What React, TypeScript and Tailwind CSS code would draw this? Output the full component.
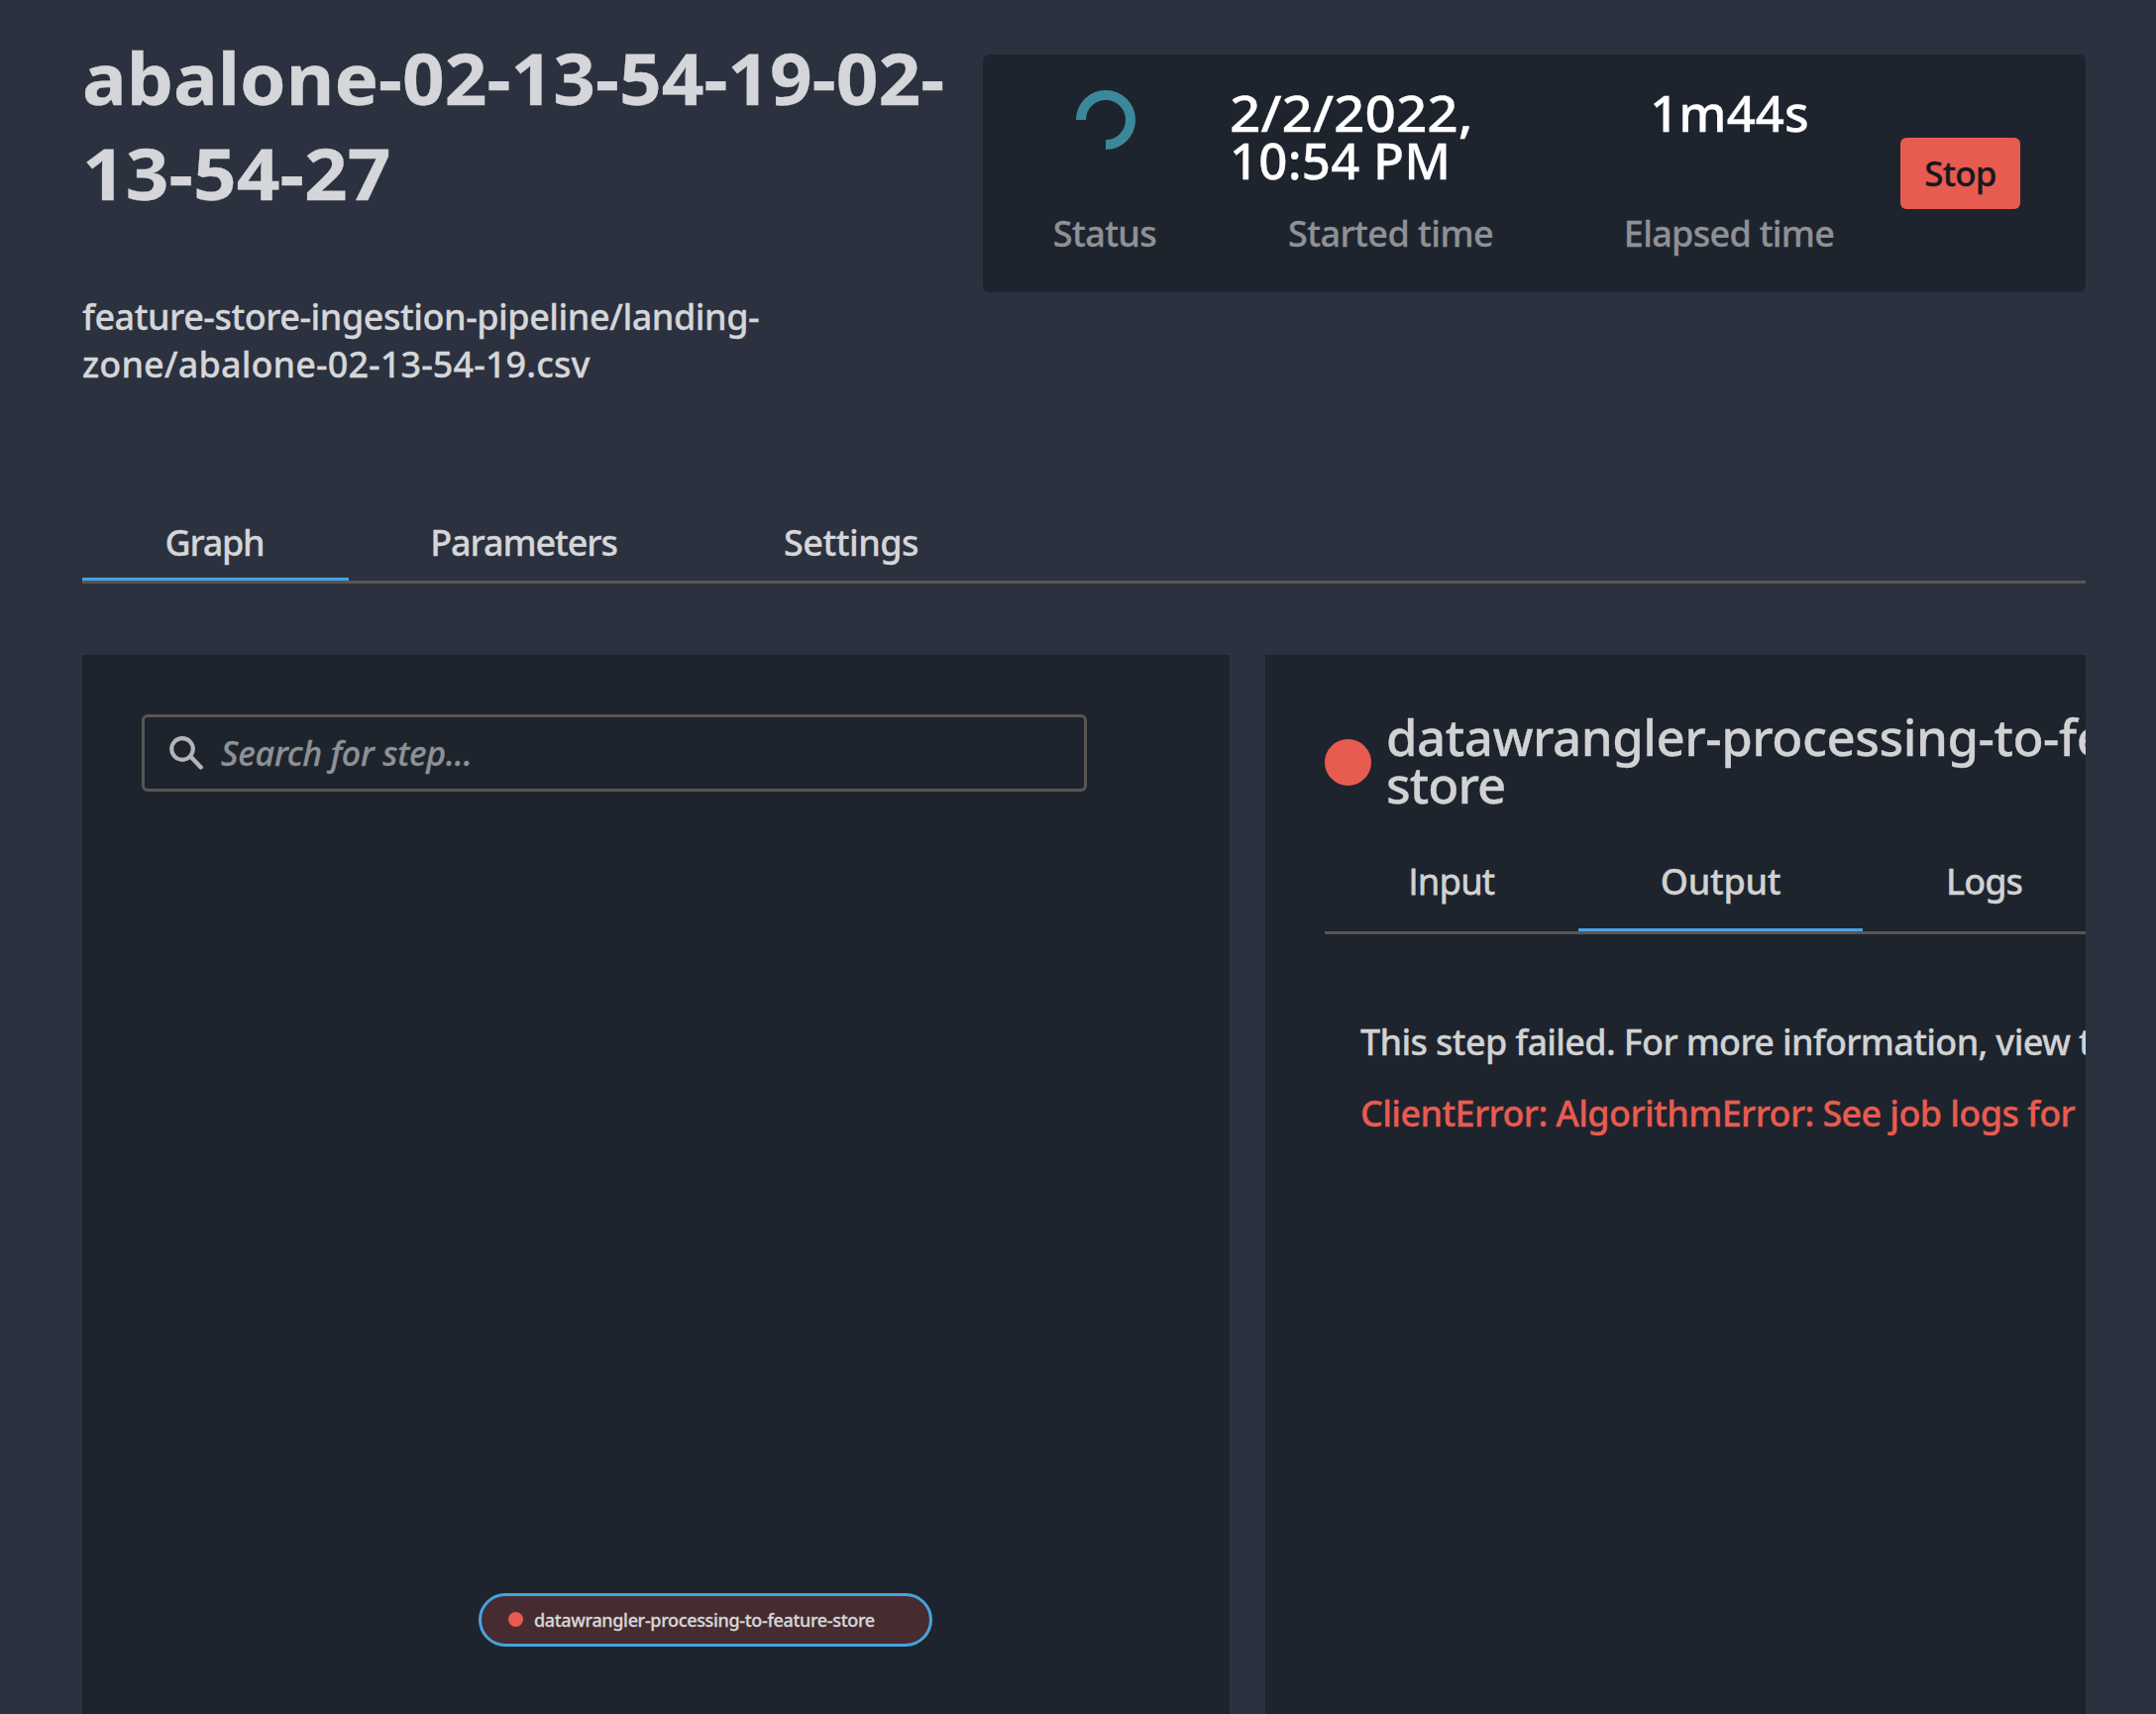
import React from "react";

const Spinner = () => (
  <svg className="h-[60px] w-[60px]" viewBox="0 0 60 60" fill="none" stroke="#3b889b" strokeWidth="10">
    <path d="M5 30A25 25 0 1 1 30 55" />
  </svg>
);

const SearchIcon = () => (
  <svg className="h-[34px] w-[34px] shrink-0" viewBox="0 0 34 34" fill="none" stroke="#b3b5b8">
    <circle cx="13" cy="13" r="10.8" strokeWidth="4.2" />
    <path d="M22 21.2L31.7 31.4" strokeWidth="4.4" strokeLinecap="round" />
  </svg>
);

function Tab({ label, className, active }: { label: string; className: string; active?: boolean }) {
  return (
    <button
      className={`block whitespace-nowrap border-b-[3px] text-center font-medium ${
        active ? "border-[#48a3df]" : "border-transparent"
      } ${className}`}
    >
      {label}
    </button>
  );
}

function Metric({ label, labelClass, className, children }: {
  label: string;
  labelClass: string;
  className: string;
  children: React.ReactNode;
}) {
  return (
    <div className={`flex h-full flex-col items-center ${className}`}>
      <div className="flex h-[123px] w-full flex-col">{children}</div>
      <div className={`whitespace-nowrap text-[36px] leading-[48px] text-[#8e9196] ${labelClass}`}>{label}</div>
    </div>
  );
}

export default function App() {
  return (
    <div className="flex h-[1730px] w-[2176px] flex-col overflow-hidden bg-[#2b313f] pl-[83px] pr-[71px] font-['Noto_Sans',sans-serif] font-medium text-[#d5d6d9] [-webkit-text-stroke:0.3px_currentColor]">
      <header className="flex h-[511px] shrink-0 items-start">
        <div className="w-[909px] shrink-0 pt-[31px]">
          <h1 className="whitespace-nowrap text-[71px] font-bold leading-[96px]">
            <span className="block w-fit origin-left scale-x-[1.053]">abalone-02-13-54-19-02-</span>
            <span className="block w-fit origin-left scale-x-[1.077]">13-54-27</span>
          </h1>
          <p className="mt-[73px] whitespace-nowrap text-[36px] leading-[48px]">
            <span className="block tracking-[-0.475px]">feature-store-ingestion-pipeline/landing-</span>
            <span className="block tracking-[0.11px]">zone/abalone-02-13-54-19.csv</span>
          </p>
        </div>
        <section className="mt-[55px] flex h-[240px] w-[1113px] items-center rounded-md bg-[#1e242d]">
          <Metric label="Status" labelClass="tracking-[-0.6px] -ml-0.5" className="w-[248px] pt-[34px]">
            <div className="mx-auto pt-[2px]"><Spinner /></div>
          </Metric>
          <Metric label="Started time" labelClass="tracking-[-0.55px]" className="w-[327px] pt-[34px]">
            <div className="whitespace-nowrap text-[51px] leading-[48px] text-white">
              <span className="block w-fit origin-left scale-x-[1.076] pl-px">2/2/2022,</span>
              <span className="block pl-px tracking-[0.2px]">10:54 PM</span>
            </div>
          </Metric>
          <Metric label="Elapsed time" labelClass="tracking-[-0.7px]" className="w-[351px] pl-[5px] pt-[34px]">
            <div className="pl-px text-center text-[51px] leading-[48px] text-white">1m44s</div>
          </Metric>
          <button className="h-[72px] w-[121px] rounded-md bg-[#e85b50] text-[35px] font-medium leading-[48px] tracking-[-0.8px] text-[#16191f]">
            Stop
          </button>
        </section>
      </header>

      <nav className="flex shrink-0 border-b-[3px] border-[#585654] text-[36px] leading-[48px]">
        <Tab label="Graph" active className="w-[269px] pb-[11px] pr-[2px] pt-[13px] tracking-[-1.25px]" />
        <Tab label="Parameters" className="w-[355px] pb-[11px] pr-[2px] pt-[13px] tracking-[-1.1px]" />
        <Tab label="Settings" className="w-[305px] pb-[11px] pr-px pt-[13px] tracking-[-0.5px]" />
      </nav>

      <main className="mt-[72px] flex min-h-0 flex-1 gap-9">
        <section className="flex w-[1158px] shrink-0 flex-col bg-[#1e242d] pt-[60px]">
          <div className="ml-[60px] flex h-[78px] w-[954px] items-center rounded-md border-[3px] border-[#585654] pl-[25px]">
            <SearchIcon />
            <span className="ml-[18px] text-[34px] italic leading-[48px] tracking-[-0.2px] text-[#8e9196]">
              Search for step...
            </span>
          </div>
          <div className="ml-[400px] mt-[809px] flex h-[54px] w-[458px] items-center rounded-full border-[3px] border-[#48a3df] bg-[#462c30] pl-[27px]">
            <span className="mb-px h-[15px] w-[15px] rounded-full bg-[#e85b50]" />
            <span className="ml-[11px] whitespace-nowrap text-[18px] leading-6 tracking-[-0.34px]">
              datawrangler-processing-to-feature-store
            </span>
          </div>
        </section>

        <section className="w-[828px] shrink-0 overflow-hidden bg-[#1e242d] pl-[60px] pt-[58px] text-[#d1d2d3]">
          <div className="flex items-center whitespace-nowrap">
            <span className="mt-1 h-[47px] w-[47px] shrink-0 rounded-full bg-[#e85b50]" />
            <h2 className="ml-[15px] text-[51px] font-medium leading-[48px]">
              <span className="block tracking-[-0.52px]">datawrangler-processing-to-feature-</span>
              <span className="block tracking-[-1px]">store</span>
            </h2>
          </div>
          <div className="mt-[50px] flex w-[900px] border-b-[3px] border-[#585654] text-[36px] leading-[48px]">
            <Tab label="Input" className="w-[256px] pb-[23px] pt-px font-['Open_Sans',sans-serif] tracking-[-0.4px] [-webkit-text-stroke:0.9px_currentColor]" />
            <Tab label="Output" active className="w-[287px] pb-[23px] pt-px tracking-[-0.3px]" />
            <Tab label="Logs" className="w-[246px] pb-[23px] pr-px pt-px tracking-[-1px]" />
          </div>
          <div className="pl-[36px] pt-[85px] text-[36px] leading-[48px]">
            <p className="whitespace-nowrap tracking-[-0.68px]">This step failed. For more information, view the logs.</p>
            <p className="mt-6 whitespace-nowrap tracking-[-0.63px] text-[#e85b50]">ClientError: AlgorithmError: See job logs for</p>
          </div>
        </section>
      </main>
    </div>
  );
}
